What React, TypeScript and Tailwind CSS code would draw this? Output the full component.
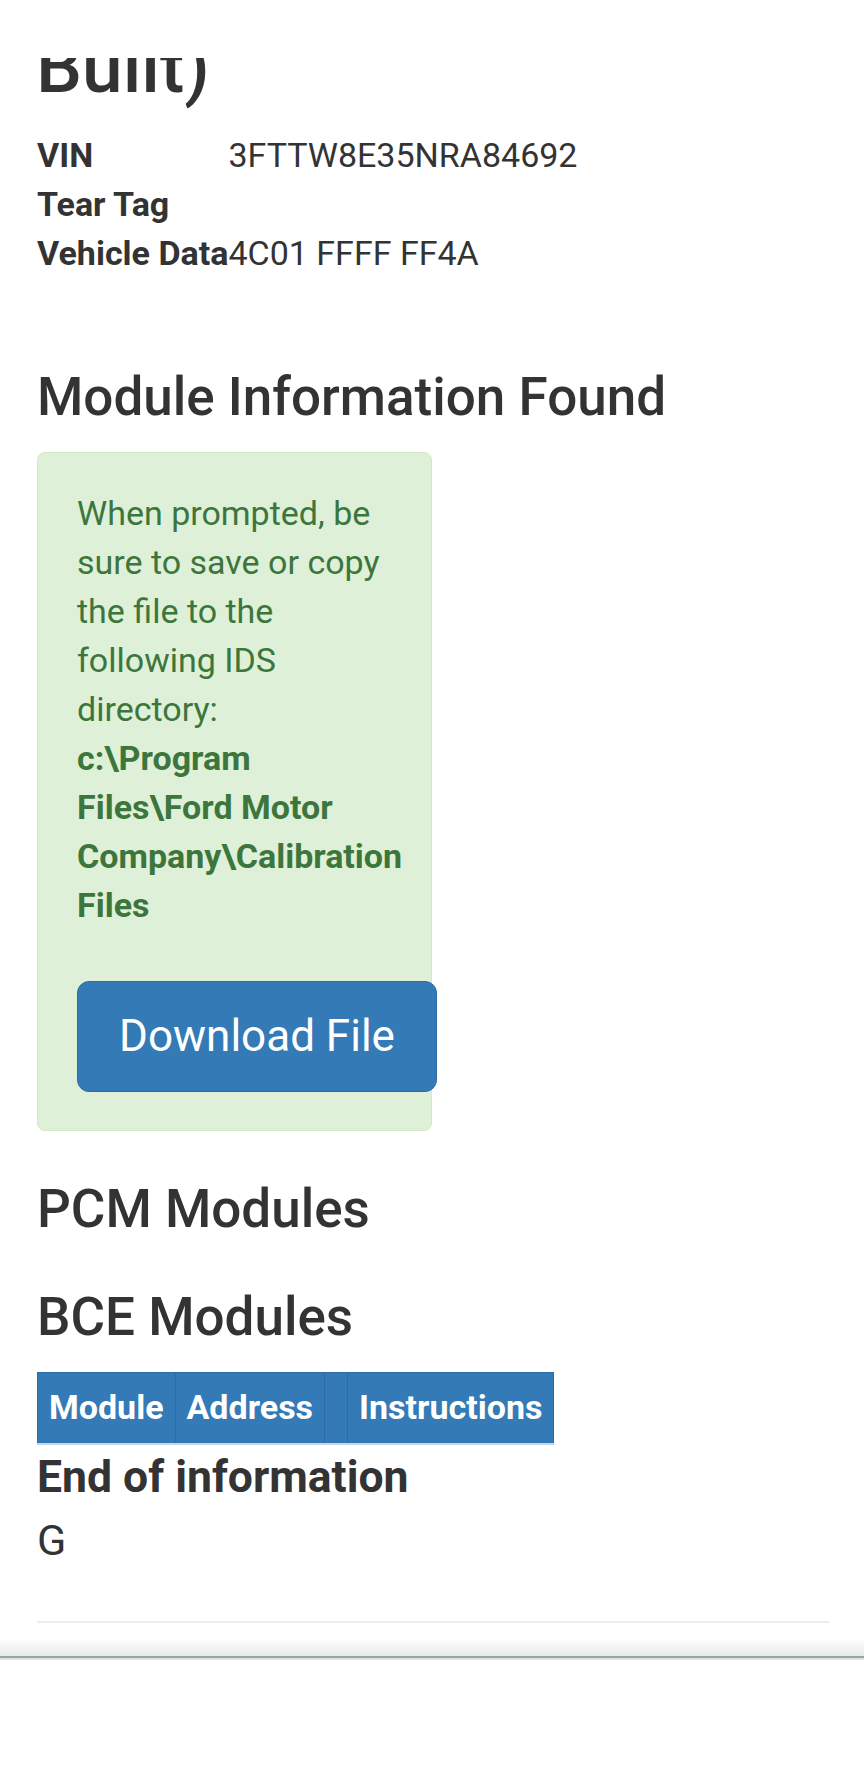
import React from "react";

const rows: { label: string; value: string }[] = [
  { label: "VIN", value: "3FTTW8E35NRA84692" },
  { label: "Tear Tag", value: "" },
  { label: "Vehicle Data", value: "4C01 FFFF FF4A" },
];

export default function App() {
  return (
    <div
      className="w-[864px] h-[1776px] bg-white text-[#333333] overflow-hidden flex flex-col"
      style={{ fontFamily: "Roboto, 'Noto Sans', Arial, sans-serif" }}
    >
      <div className="pl-[37px] pr-[35px]">
        {/* last line of the page title, scrolled partly under the header strip */}
        <div className="h-[58px]" />
        <div className="h-[73px] overflow-hidden">
          <h1 className="mt-[-31px] text-[73px] leading-[80px] font-medium whitespace-nowrap -ml-px">
            Built)
          </h1>
        </div>

        {/* vehicle details */}
        <div className="grid grid-cols-[auto_1fr] text-[34px] leading-[49px]">
          {rows.map((r) => (
            <React.Fragment key={r.label}>
              <div className="font-bold">{r.label}</div>
              <div>{r.value}</div>
            </React.Fragment>
          ))}
        </div>

        <h2 className="mt-[90px] text-[53px] leading-[58px] font-medium">Module Information Found</h2>

        <div className="mt-[26px] w-[395px] rounded-[8px] border border-[#d6e9c6] bg-[#dff0d8] text-[#3c763d] px-[39px] pt-[36px] pb-[38px]">
          <p className="text-[34px] leading-[49px]">
            When prompted, be sure to save or copy the file to the following IDS directory:
            <br />
            <b>c:\Program Files\Ford Motor Company\Calibration Files</b>
          </p>
          <button
            type="button"
            className="mt-[51px] block w-[360px] rounded-[12px] border border-[#2e6da4] bg-[#337ab7] py-[25px] text-center text-[44px] leading-[59px] text-white"
          >
            Download File
          </button>
        </div>

        <h3 className="mt-[49px] text-[53px] leading-[58px] font-medium">PCM Modules</h3>
        <h3 className="mt-[50px] text-[53px] leading-[58px] font-medium">BCE Modules</h3>

        <table className="mt-[26px] border-collapse text-[34px] leading-[49px] font-bold text-white">
          <thead>
            <tr className="bg-[#337ab7]">
              <th className="border border-[#2e6da4] border-b-2 border-b-[#c5d7e9] px-[11px] pt-[10px] pb-[11px] text-left">
                Module
              </th>
              <th className="border border-[#2e6da4] border-b-2 border-b-[#c5d7e9] px-[11px] pt-[10px] pb-[11px] text-left">
                Address
              </th>
              <th className="border border-[#2e6da4] border-b-2 border-b-[#c5d7e9] px-[11px] pt-[10px] pb-[11px] text-left" />
              <th className="border border-[#2e6da4] border-b-2 border-b-[#c5d7e9] px-[11px] pt-[10px] pb-[11px] text-left">
                Instructions
              </th>
            </tr>
          </thead>
        </table>

        <h4 className="mt-[9px] text-[44.5px] leading-[46px] font-bold">End of information</h4>
        <h4 className="mt-[16px] text-[43px] leading-[49px] font-normal">G</h4>

        <hr className="mt-[56px] border-0 border-t-2 border-[#eeeeee]" />
      </div>

      {/* bottom toolbar edge */}
      <div className="mt-[16px] h-[17px] bg-gradient-to-b from-white to-[#e6e8ea]" />
      <div className="h-[2px] bg-[#9aa6a2]" />
      <div className="h-[2px] bg-[#dfe3e3]" />
      <div className="flex-1 bg-white" />
    </div>
  );
}
